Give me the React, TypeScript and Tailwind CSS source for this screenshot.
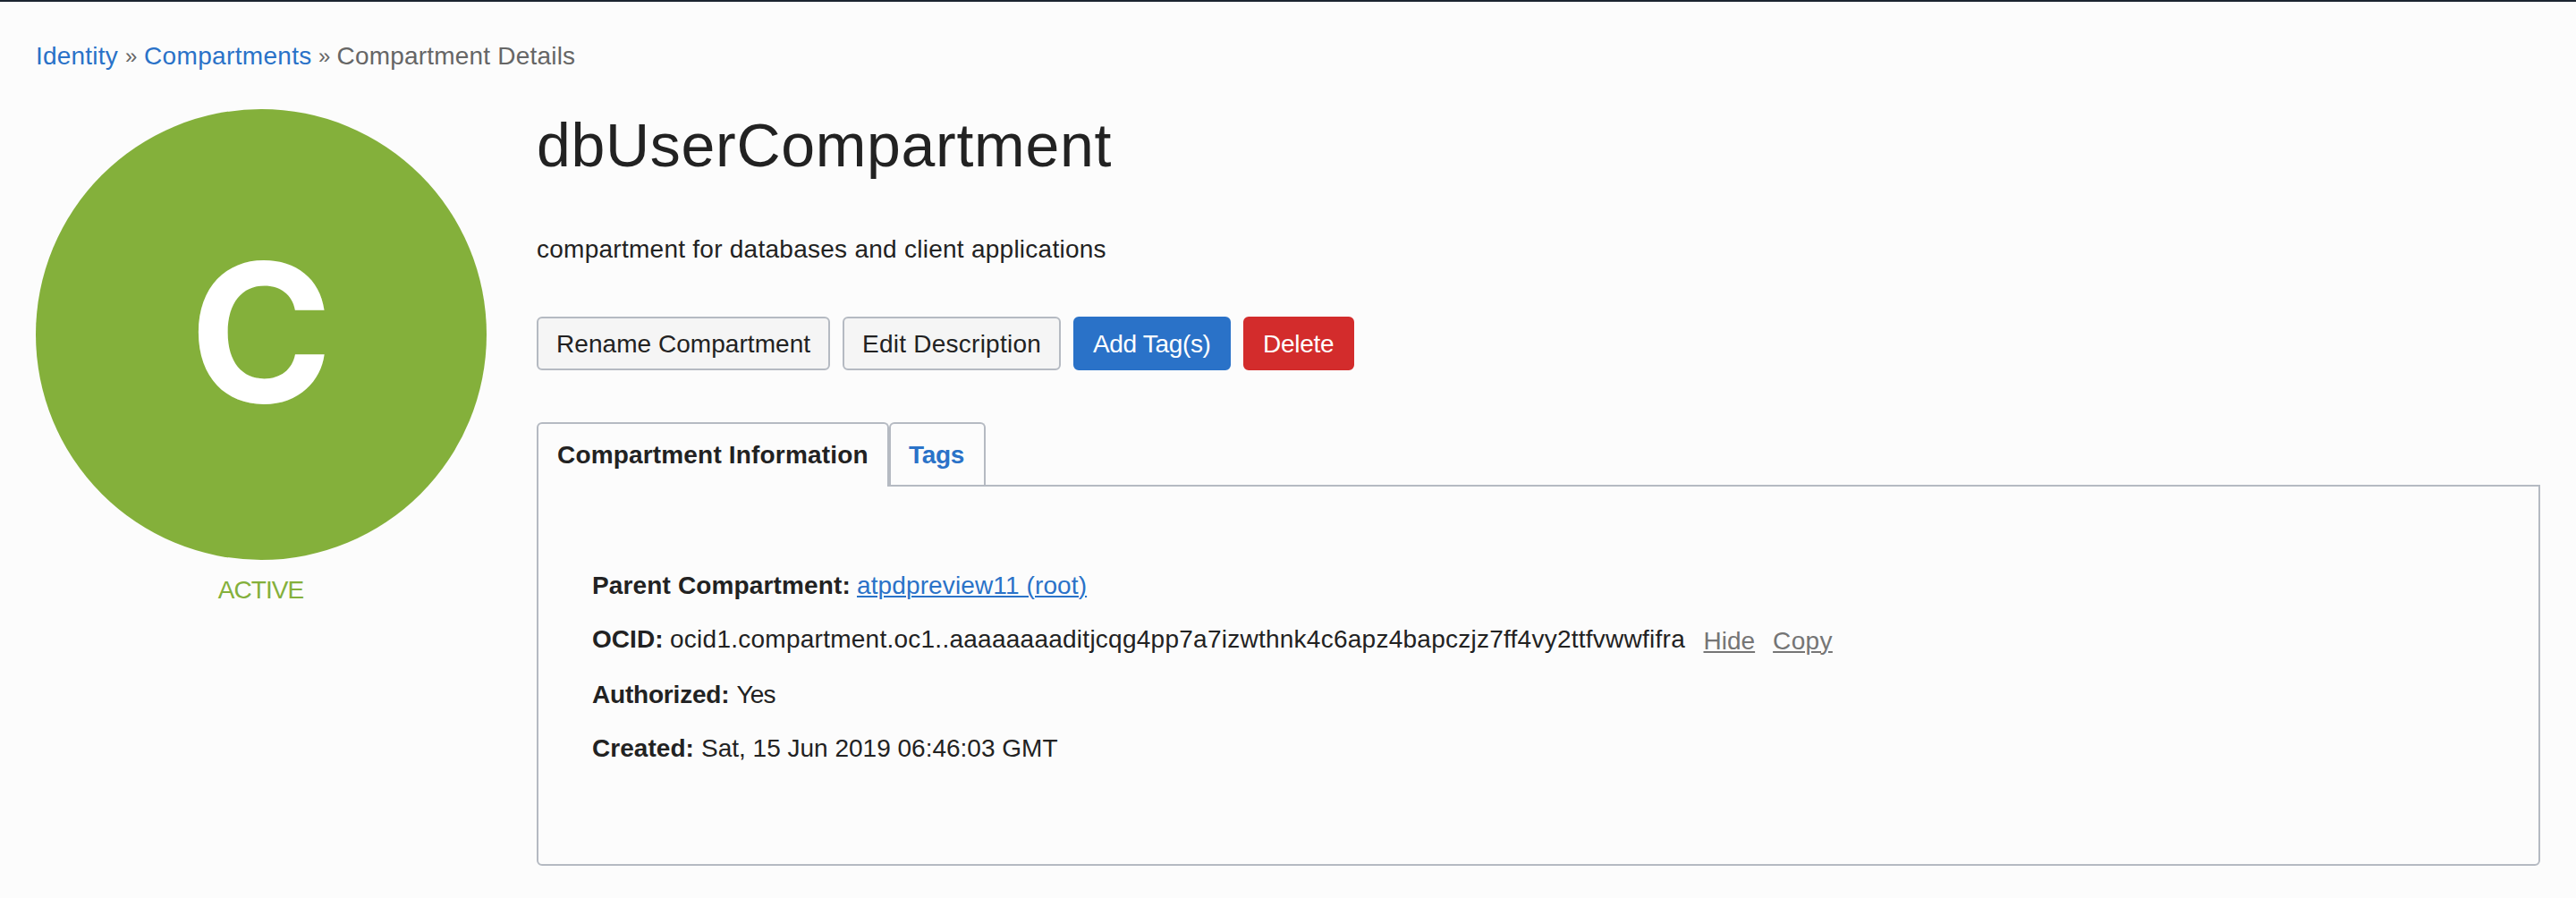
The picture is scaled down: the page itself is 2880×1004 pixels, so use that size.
import type { ReactNode } from "react";

function Row({ label, labelClass, className, children }: { label: string; labelClass: string; className: string; children: ReactNode }) {
  return (
    <div className={`flex items-start whitespace-pre ${className}`}>
      <span className={`shrink-0 font-bold ${labelClass}`}>{label}</span>
      {children}
    </div>
  );
}

const link = "underline decoration-2 underline-offset-2";

export default function App() {
  return (
    <div className="h-[1004px] w-full overflow-hidden border-t-2 border-[#1b2430] bg-[#fcfcfc] px-10 pt-10 font-['Liberation_Sans',Arial,sans-serif] text-[28px] leading-[42px] text-[#222222]">
      <nav className="flex whitespace-pre text-[#666666]">
        <a className="w-[100px] tracking-[0.2px] text-[#2a72c8]">Identity</a>
        <span className="w-[21px] text-[24px]">»</span>
        <a className="w-[195px] tracking-[0.34px] text-[#2a72c8]">Compartments</a>
        <span className="w-[20.5px] text-[24px]">»</span>
        <span className="tracking-[0.2px]">Compartment Details</span>
      </nav>

      <div className="mt-[38px] flex gap-14">
        <aside className="w-[504px] shrink-0 text-center text-[#84b03b]">
          <div className="flex h-[504px] items-center justify-center rounded-full bg-[#84b03b]">
            <span className="-mt-1 block font-[Inter] text-[216px] leading-[504px] font-bold text-white">C</span>
          </div>
          <div className="mt-[13px] -ml-px tracking-[-0.9px]">ACTIVE</div>
        </aside>

        <main className="min-w-0 flex-1">
          <h1 className="text-[68px] leading-20 tracking-[0.7px]">dbUserCompartment</h1>
          <p className="mt-14 tracking-[0.26px]">compartment for databases and client applications</p>

          <div className="mt-[54px] flex gap-3.5 leading-[54px] whitespace-nowrap">
            <button className="h-15 w-[328px] rounded-md border-2 border-[#b5bac2] bg-[#f5f5f5] pt-0.5 pl-5 text-left tracking-[0.05px]">Rename Compartment</button>
            <button className="h-15 w-[244px] rounded-md border-2 border-[#b5bac2] bg-[#f5f5f5] pt-0.5 pl-5 text-left tracking-[0.25px]">Edit Description</button>
            <button className="h-15 w-44 rounded-md border-2 border-[#2a72c8] bg-[#2a72c8] pt-0.5 pl-5 text-left tracking-[-0.33px] text-white">Add Tag(s)</button>
            <button className="h-15 w-[124px] rounded-md border-2 border-[#d32c2c] bg-[#d32c2c] pt-0.5 pl-5 text-left tracking-[-0.25px] text-white">Delete</button>
          </div>

          <div className="mt-[58px] flex h-[70px] leading-[70px] font-bold whitespace-nowrap">
            <div className="relative h-[72px] w-[394px] rounded-t-md border-2 border-b-0 border-[#b5bac2] bg-[#fcfcfc] pl-[21px] tracking-[0.17px]">Compartment Information</div>
            <div className="h-[70px] w-[108px] rounded-t-md border-2 border-b-0 border-[#b5bac2] pl-5 tracking-[-0.3px] text-[#2a72c8]">Tags</div>
          </div>
          <section className="h-[426px] rounded-b-md border-2 border-[#b5bac2] pt-[90px] pl-[60px]">
            <Row label="Parent Compartment:" labelClass="w-[296px] tracking-[0.14px]" className="h-15">
              <a className={`tracking-[0.12px] text-[#2a72c8] ${link}`}>atpdpreview11 (root)</a>
            </Row>
            <Row label="OCID:" labelClass="w-[87px] tracking-[0.05px]" className="h-[62px]">
              <span className="w-[1155.5px] tracking-[0.254px]">ocid1.compartment.oc1..aaaaaaaaditjcqg4pp7a7izwthnk4c6apz4bapczjz7ff4vy2ttfvwwfifra</span>
              <a className={`mt-0.5 mr-5 text-[#757575] ${link}`}>Hide</a>
              <a className={`mt-0.5 tracking-[0.35px] text-[#757575] ${link}`}>Copy</a>
            </Row>
            <Row label="Authorized:" labelClass="w-[161.5px] tracking-[-0.2px]" className="h-15">
              <span className="tracking-[-0.8px]">Yes</span>
            </Row>
            <Row label="Created:" labelClass="w-[122px] tracking-[0.05px]" className="h-10">
              <span>Sat, 15 Jun 2019 06:46:03 GMT</span>
            </Row>
          </section>
        </main>
      </div>
    </div>
  );
}
